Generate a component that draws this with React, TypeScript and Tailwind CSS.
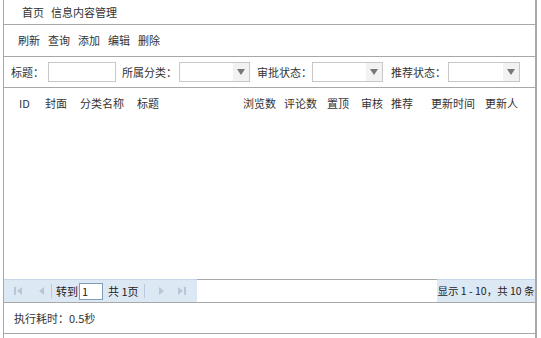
const font = { fontFamily: '"Noto Sans CJK SC", "Liberation Sans", sans-serif' };

const Select = ({ w }: { w: string }) => (
  <div className={`flex h-[20px] ${w} items-center justify-end border border-[#c8c8c8] bg-white`}>
    <div className="flex h-full w-[16px] items-center justify-center bg-[#f2f2f2]">
      <svg width="8" height="6" viewBox="0 0 8 6">
        <path d="M0 0h8L4 6z" fill="#777" />
      </svg>
    </div>
  </div>
);

const PagerIcon = ({ d }: { d: string }) => (
  <svg width="10" height="10" viewBox="0 0 10 10">
    <path d={d} fill="#b9c6d8" />
  </svg>
);

const cols = [
  { t: 'ID', x: 'w-[26px]' },
  { t: '封面', x: 'w-[35px]' },
  { t: '分类名称', x: 'w-[57px]' },
  { t: '标题', x: 'w-[106px]' },
  { t: '浏览数', x: 'w-[41px]' },
  { t: '评论数', x: 'w-[43px]' },
  { t: '置顶', x: 'w-[34px]' },
  { t: '审核', x: 'w-[30px]' },
  { t: '推荐', x: 'w-[40px]' },
  { t: '更新时间', x: 'w-[54px]' },
  { t: '更新人', x: 'w-[45px]' },
];

export default function App() {
  return (
    <div className="h-[338px] w-[541px] overflow-hidden whitespace-nowrap bg-white pl-[3px] text-[11px] text-[#333]" style={font}>
      <div className="flex h-[338px] w-[534px] flex-col border-l border-r-2 border-[#a8a8a8]">
        <div className="flex h-[25px] shrink-0 items-center gap-[7px] border-b border-[#a8a8a8] pl-[18px]">
          <span>首页</span>
          <span>信息内容管理</span>
        </div>
        <div className="flex h-[32px] shrink-0 items-center gap-2 border-b border-[#a8a8a8] pl-[14px]">
          <span>刷新</span>
          <span>查询</span>
          <span>添加</span>
          <span>编辑</span>
          <span>删除</span>
        </div>
        <div className="flex h-[31px] shrink-0 items-center border-b border-[#a8a8a8] pl-[7px]">
          <span className="w-[37px]">标题：</span>
          <div className="h-[20px] w-[68px] border border-[#c8c8c8]" />
          <span className="ml-[6px] w-[57px]">所属分类：</span>
          <Select w="w-[71px]" />
          <span className="ml-[7px] w-[55px]">审批状态：</span>
          <Select w="w-[71px]" />
          <span className="ml-[8px] w-[57px]">推荐状态：</span>
          <Select w="w-[72px]" />
        </div>
        <div className="flex-1">
          <div className="flex h-[31px] items-center pl-[15px]">
            {cols.map((c) => (
              <span key={c.t} className={`${c.x} shrink-0`}>
                {c.t}
              </span>
            ))}
          </div>
        </div>
        <div className="flex h-[24px] shrink-0 border-b border-[#a8a8a8]">
          <div className="flex w-[193px] items-center border-t border-[#c5d5ea] bg-[#dde8f5] pl-[9px] text-[#222]">
            <PagerIcon d="M1 1h2v8H1zM9 1v8L4 5z" />
            <span className="ml-[13px]">
              <PagerIcon d="M8 1v8L3 5z" />
            </span>
            <span className="ml-[5px] h-[14px] w-px bg-[#b8c8de]" />
            <span className="ml-[4px]">转到</span>
            <div className="ml-px flex h-[17px] w-[24px] items-center border border-[#7f9db9] bg-white pl-[2px] leading-none">1</div>
            <span className="ml-[5px]">共 1页</span>
            <span className="ml-[5px] h-[14px] w-px bg-[#b8c8de]" />
            <span className="ml-[12px]">
              <PagerIcon d="M2 1v8l5-4z" />
            </span>
            <span className="ml-[10px]">
              <PagerIcon d="M1 1v8l5-4zM7 1h2v8H7z" />
            </span>
          </div>
          <div className="flex-1 border-t border-[#a8a8a8]" />
          <div className="flex w-[98px] items-center justify-center border-t border-[#c5d5ea] bg-[#dde8f5] text-[10.5px] text-[#222]">
            显示 1 - 10，共 10 条
          </div>
        </div>
        <div className="flex h-[31px] shrink-0 items-center border-b border-[#a8a8a8] pl-[10px]">
          执行耗时：0.5秒
        </div>
        <div className="h-[4px] shrink-0" />
      </div>
    </div>
  );
}
